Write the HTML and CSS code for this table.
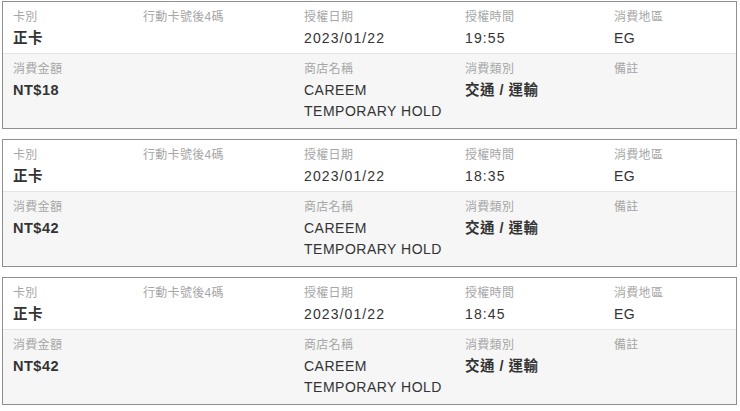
FILE: index.html
```html
<!DOCTYPE html>
<html lang="zh-Hant">
<head>
<meta charset="utf-8">
<title>交易明細</title>
<link rel="stylesheet" href="styles.css">
</head>
<body>
<div class="list">
  <section class="card">
    <div class="row row-top">
      <div class="cell"><div class="label">卡別</div><div class="value strong">正卡</div></div>
      <div class="cell"><div class="label">行動卡號後4碼</div><div class="value"></div></div>
      <div class="cell"><div class="label">授權日期</div><div class="value num">2023/01/22</div></div>
      <div class="cell"><div class="label">授權時間</div><div class="value num">19:55</div></div>
      <div class="cell"><div class="label">消費地區</div><div class="value">EG</div></div>
    </div>
    <div class="row row-bottom">
      <div class="cell"><div class="label">消費金額</div><div class="value strong">NT$18</div></div>
      <div class="cell"></div>
      <div class="cell"><div class="label">商店名稱</div><div class="value">CAREEM<br>TEMPORARY HOLD</div></div>
      <div class="cell"><div class="label">消費類別</div><div class="value strong">交通 / 運輸</div></div>
      <div class="cell"><div class="label">備註</div><div class="value"></div></div>
    </div>
  </section>
  <section class="card">
    <div class="row row-top">
      <div class="cell"><div class="label">卡別</div><div class="value strong">正卡</div></div>
      <div class="cell"><div class="label">行動卡號後4碼</div><div class="value"></div></div>
      <div class="cell"><div class="label">授權日期</div><div class="value num">2023/01/22</div></div>
      <div class="cell"><div class="label">授權時間</div><div class="value num">18:35</div></div>
      <div class="cell"><div class="label">消費地區</div><div class="value">EG</div></div>
    </div>
    <div class="row row-bottom">
      <div class="cell"><div class="label">消費金額</div><div class="value strong">NT$42</div></div>
      <div class="cell"></div>
      <div class="cell"><div class="label">商店名稱</div><div class="value">CAREEM<br>TEMPORARY HOLD</div></div>
      <div class="cell"><div class="label">消費類別</div><div class="value strong">交通 / 運輸</div></div>
      <div class="cell"><div class="label">備註</div><div class="value"></div></div>
    </div>
  </section>
  <section class="card">
    <div class="row row-top">
      <div class="cell"><div class="label">卡別</div><div class="value strong">正卡</div></div>
      <div class="cell"><div class="label">行動卡號後4碼</div><div class="value"></div></div>
      <div class="cell"><div class="label">授權日期</div><div class="value num">2023/01/22</div></div>
      <div class="cell"><div class="label">授權時間</div><div class="value num">18:45</div></div>
      <div class="cell"><div class="label">消費地區</div><div class="value">EG</div></div>
    </div>
    <div class="row row-bottom">
      <div class="cell"><div class="label">消費金額</div><div class="value strong">NT$42</div></div>
      <div class="cell"></div>
      <div class="cell"><div class="label">商店名稱</div><div class="value">CAREEM<br>TEMPORARY HOLD</div></div>
      <div class="cell"><div class="label">消費類別</div><div class="value strong">交通 / 運輸</div></div>
      <div class="cell"><div class="label">備註</div><div class="value"></div></div>
    </div>
  </section>
</div>
</body>
</html>
```
FILE: styles.css
```css
html, body {
  margin: 0;
  padding: 0;
  background: #ffffff;
}
body {
  padding: 1px 4px 0 2px;
  font-family: "Liberation Sans", "Noto Sans CJK TC", sans-serif;
  color: #333333;
}
.list {
  display: flex;
  flex-direction: column;
  gap: 10px;
}
.card {
  border: 1px solid #8f8f8f;
  width: 733px;
}
.row {
  display: grid;
  grid-template-columns: 130px 161px 161px 149px 1fr;
  padding: 0 10px;
}
.row-top {
  background: #ffffff;
  padding-top: 6px;
  padding-bottom: 4px;
  border-bottom: 1px solid #e6e6e6;
}
.row-bottom {
  background: #f6f6f6;
  padding-top: 6px;
  padding-bottom: 6px;
}
.cell {
  display: flex;
  flex-direction: column;
  gap: 2px;
}
.row-bottom .cell {
  min-height: 62px;
}
.label {
  font-size: 12px;
  line-height: 18px;
  color: #a6a6a6;
  letter-spacing: 0.3px;
}
.value {
  font-size: 14px;
  line-height: 21px;
  min-height: 21px;
  color: #333333;
  letter-spacing: 0.5px;
}
.num {
  letter-spacing: 1.1px;
}
.strong {
  font-weight: 700;
  font-size: 14.5px;
}
```
